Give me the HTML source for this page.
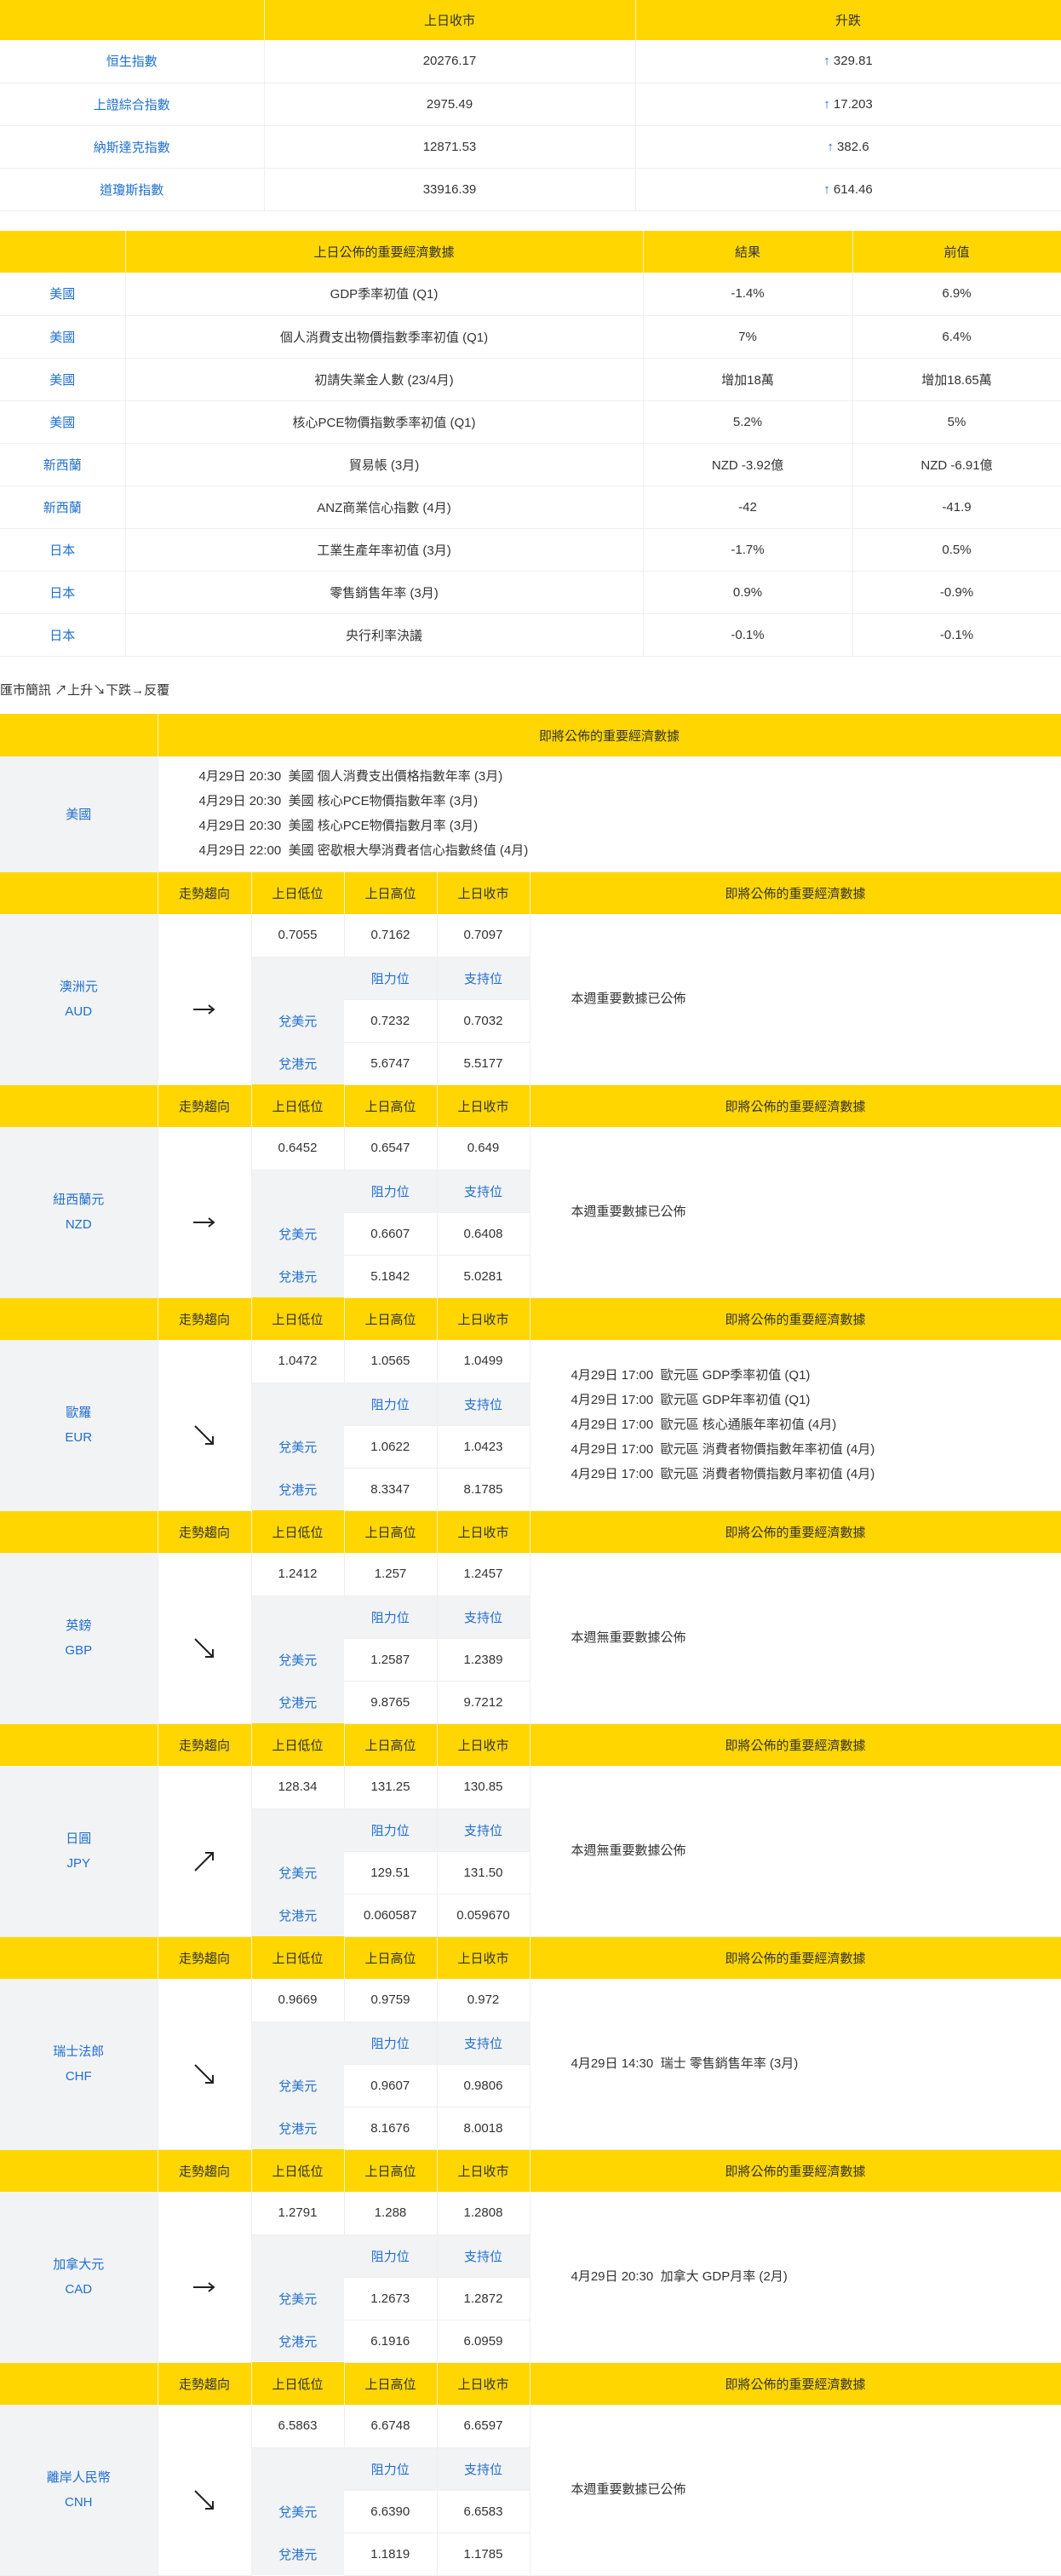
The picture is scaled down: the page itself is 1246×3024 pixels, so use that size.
<!DOCTYPE html>
<html><head><meta charset="utf-8">
<style>
*{margin:0;padding:0;box-sizing:border-box}
body{width:1246px;height:3003px;overflow:hidden;background:#fff;font-family:"Liberation Sans","Noto Sans CJK TC",sans-serif;font-size:15px;color:#333}
table{border-collapse:collapse;table-layout:fixed;width:1246px}
td,th{text-align:center;vertical-align:middle;font-weight:normal;padding:0;border-bottom:1px solid #efefef;border-right:1px solid #efefef}
th{background:#ffd600;color:#333;border-right:1px solid #fff4c0;border-bottom:none}
.b{color:#1f6fcc}
.g{background:#f2f3f5}
.l{text-align:left;padding-left:48px;line-height:29px}
#t1{position:absolute;top:0;left:0}
#t1 th{height:47px}#t1 td{height:50px}
#t2{position:absolute;top:271px;left:0}
#t2 th{height:49px}#t2 td{height:50px}
#note{position:absolute;top:799px;left:0;font-size:15px}
#t3{position:absolute;top:838px;left:0}
#t3 th{height:50px}
#t3 td{height:50px}
.up{color:#2b5fc0}
.cur{line-height:29px}
svg{display:block;margin:24px auto 0}
</style></head><body>
<table id="t1">
<colgroup><col style="width:310px"><col style="width:436px"><col style="width:500px"></colgroup>
<tr><th></th><th>上日收市</th><th>升跌</th></tr>
<tr><td class="b">恒生指數</td><td>20276.17</td><td><span class="up">↑</span> 329.81</td></tr>
<tr><td class="b">上證綜合指數</td><td>2975.49</td><td><span class="up">↑</span> 17.203</td></tr>
<tr><td class="b">納斯達克指數</td><td>12871.53</td><td><span class="up">↑</span> 382.6</td></tr>
<tr><td class="b">道瓊斯指數</td><td>33916.39</td><td><span class="up">↑</span> 614.46</td></tr>
</table>

<table id="t2">
<colgroup><col style="width:147px"><col style="width:608px"><col style="width:246px"><col style="width:245px"></colgroup>
<tr><th></th><th>上日公佈的重要經濟數據</th><th>結果</th><th>前值</th></tr>
<tr><td class="b">美國</td><td>GDP季率初值 (Q1)</td><td>-1.4%</td><td>6.9%</td></tr>
<tr><td class="b">美國</td><td>個人消費支出物價指數季率初值 (Q1)</td><td>7%</td><td>6.4%</td></tr>
<tr><td class="b">美國</td><td>初請失業金人數 (23/4月)</td><td>增加18萬</td><td>增加18.65萬</td></tr>
<tr><td class="b">美國</td><td>核心PCE物價指數季率初值 (Q1)</td><td>5.2%</td><td>5%</td></tr>
<tr><td class="b">新西蘭</td><td>貿易帳 (3月)</td><td>NZD -3.92億</td><td>NZD -6.91億</td></tr>
<tr><td class="b">新西蘭</td><td>ANZ商業信心指數 (4月)</td><td>-42</td><td>-41.9</td></tr>
<tr><td class="b">日本</td><td>工業生產年率初值 (3月)</td><td>-1.7%</td><td>0.5%</td></tr>
<tr><td class="b">日本</td><td>零售銷售年率 (3月)</td><td>0.9%</td><td>-0.9%</td></tr>
<tr><td class="b">日本</td><td>央行利率決議</td><td>-0.1%</td><td>-0.1%</td></tr>
</table>

<div id="note">匯市簡訊 ↗上升↘下跌→反覆</div>

<table id="t3">
<colgroup><col style="width:185px"><col style="width:110px"><col style="width:109px"><col style="width:109px"><col style="width:109px"><col style="width:624px"></colgroup>
<tr><th></th><th colspan="5">即將公佈的重要經濟數據</th></tr>
<tr><td class="g b" style="height:135px">美國</td><td colspan="5" style="text-align:left;padding-left:48px;line-height:29px;height:135px">4月29日 20:30&nbsp; 美國 個人消費支出價格指數年率 (3月)<br>4月29日 20:30&nbsp; 美國 核心PCE物價指數年率 (3月)<br>4月29日 20:30&nbsp; 美國 核心PCE物價指數月率 (3月)<br>4月29日 22:00&nbsp; 美國 密歇根大學消費者信心指數終值 (4月)</td></tr>

<tr><th></th><th>走勢趨向</th><th>上日低位</th><th>上日高位</th><th>上日收市</th><th>即將公佈的重要經濟數據</th></tr>
<tr><td rowspan="4" class="g b cur">澳洲元<br>AUD</td><td rowspan="4"><svg width="30" height="20" viewBox="0 0 30 20"><path d="M2 10H26M20 5L26 10L20 15" stroke="#222" stroke-width="2" fill="none"/></svg></td><td>0.7055</td><td>0.7162</td><td>0.7097</td><td rowspan="4" class="l">本週重要數據已公佈</td></tr>
<tr><td class="g" style="border:none"></td><td class="g b">阻力位</td><td class="g b">支持位</td></tr>
<tr><td class="g b" style="border:none">兌美元</td><td>0.7232</td><td>0.7032</td></tr>
<tr><td class="g b" style="border:none">兌港元</td><td>5.6747</td><td>5.5177</td></tr>

<tr><th></th><th>走勢趨向</th><th>上日低位</th><th>上日高位</th><th>上日收市</th><th>即將公佈的重要經濟數據</th></tr>
<tr><td rowspan="4" class="g b cur">紐西蘭元<br>NZD</td><td rowspan="4"><svg width="30" height="20" viewBox="0 0 30 20"><path d="M2 10H26M20 5L26 10L20 15" stroke="#222" stroke-width="2" fill="none"/></svg></td><td>0.6452</td><td>0.6547</td><td>0.649</td><td rowspan="4" class="l">本週重要數據已公佈</td></tr>
<tr><td class="g" style="border:none"></td><td class="g b">阻力位</td><td class="g b">支持位</td></tr>
<tr><td class="g b" style="border:none">兌美元</td><td>0.6607</td><td>0.6408</td></tr>
<tr><td class="g b" style="border:none">兌港元</td><td>5.1842</td><td>5.0281</td></tr>

<tr><th></th><th>走勢趨向</th><th>上日低位</th><th>上日高位</th><th>上日收市</th><th>即將公佈的重要經濟數據</th></tr>
<tr><td rowspan="4" class="g b cur">歐羅<br>EUR</td><td rowspan="4"><svg width="26" height="26" viewBox="0 0 26 26"><path d="M2 2L23 23M23 14V23H14" stroke="#222" stroke-width="2" fill="none"/></svg></td><td>1.0472</td><td>1.0565</td><td>1.0499</td><td rowspan="4" class="l">4月29日 17:00&nbsp; 歐元區 GDP季率初值 (Q1)<br>4月29日 17:00&nbsp; 歐元區 GDP年率初值 (Q1)<br>4月29日 17:00&nbsp; 歐元區 核心通脹年率初值 (4月)<br>4月29日 17:00&nbsp; 歐元區 消費者物價指數年率初值 (4月)<br>4月29日 17:00&nbsp; 歐元區 消費者物價指數月率初值 (4月)</td></tr>
<tr><td class="g" style="border:none"></td><td class="g b">阻力位</td><td class="g b">支持位</td></tr>
<tr><td class="g b" style="border:none">兌美元</td><td>1.0622</td><td>1.0423</td></tr>
<tr><td class="g b" style="border:none">兌港元</td><td>8.3347</td><td>8.1785</td></tr>

<tr><th></th><th>走勢趨向</th><th>上日低位</th><th>上日高位</th><th>上日收市</th><th>即將公佈的重要經濟數據</th></tr>
<tr><td rowspan="4" class="g b cur">英鎊<br>GBP</td><td rowspan="4"><svg width="26" height="26" viewBox="0 0 26 26"><path d="M2 2L23 23M23 14V23H14" stroke="#222" stroke-width="2" fill="none"/></svg></td><td>1.2412</td><td>1.257</td><td>1.2457</td><td rowspan="4" class="l">本週無重要數據公佈</td></tr>
<tr><td class="g" style="border:none"></td><td class="g b">阻力位</td><td class="g b">支持位</td></tr>
<tr><td class="g b" style="border:none">兌美元</td><td>1.2587</td><td>1.2389</td></tr>
<tr><td class="g b" style="border:none">兌港元</td><td>9.8765</td><td>9.7212</td></tr>

<tr><th></th><th>走勢趨向</th><th>上日低位</th><th>上日高位</th><th>上日收市</th><th>即將公佈的重要經濟數據</th></tr>
<tr><td rowspan="4" class="g b cur">日圓<br>JPY</td><td rowspan="4"><svg width="26" height="26" viewBox="0 0 26 26"><path d="M2 24L23 3M14 3H23V12" stroke="#222" stroke-width="2" fill="none"/></svg></td><td>128.34</td><td>131.25</td><td>130.85</td><td rowspan="4" class="l">本週無重要數據公佈</td></tr>
<tr><td class="g" style="border:none"></td><td class="g b">阻力位</td><td class="g b">支持位</td></tr>
<tr><td class="g b" style="border:none">兌美元</td><td>129.51</td><td>131.50</td></tr>
<tr><td class="g b" style="border:none">兌港元</td><td>0.060587</td><td>0.059670</td></tr>

<tr><th></th><th>走勢趨向</th><th>上日低位</th><th>上日高位</th><th>上日收市</th><th>即將公佈的重要經濟數據</th></tr>
<tr><td rowspan="4" class="g b cur">瑞士法郎<br>CHF</td><td rowspan="4"><svg width="26" height="26" viewBox="0 0 26 26"><path d="M2 2L23 23M23 14V23H14" stroke="#222" stroke-width="2" fill="none"/></svg></td><td>0.9669</td><td>0.9759</td><td>0.972</td><td rowspan="4" class="l">4月29日 14:30&nbsp; 瑞士 零售銷售年率 (3月)</td></tr>
<tr><td class="g" style="border:none"></td><td class="g b">阻力位</td><td class="g b">支持位</td></tr>
<tr><td class="g b" style="border:none">兌美元</td><td>0.9607</td><td>0.9806</td></tr>
<tr><td class="g b" style="border:none">兌港元</td><td>8.1676</td><td>8.0018</td></tr>

<tr><th></th><th>走勢趨向</th><th>上日低位</th><th>上日高位</th><th>上日收市</th><th>即將公佈的重要經濟數據</th></tr>
<tr><td rowspan="4" class="g b cur">加拿大元<br>CAD</td><td rowspan="4"><svg width="30" height="20" viewBox="0 0 30 20"><path d="M2 10H26M20 5L26 10L20 15" stroke="#222" stroke-width="2" fill="none"/></svg></td><td>1.2791</td><td>1.288</td><td>1.2808</td><td rowspan="4" class="l">4月29日 20:30&nbsp; 加拿大 GDP月率 (2月)</td></tr>
<tr><td class="g" style="border:none"></td><td class="g b">阻力位</td><td class="g b">支持位</td></tr>
<tr><td class="g b" style="border:none">兌美元</td><td>1.2673</td><td>1.2872</td></tr>
<tr><td class="g b" style="border:none">兌港元</td><td>6.1916</td><td>6.0959</td></tr>

<tr><th></th><th>走勢趨向</th><th>上日低位</th><th>上日高位</th><th>上日收市</th><th>即將公佈的重要經濟數據</th></tr>
<tr><td rowspan="4" class="g b cur">離岸人民幣<br>CNH</td><td rowspan="4"><svg width="26" height="26" viewBox="0 0 26 26"><path d="M2 2L23 23M23 14V23H14" stroke="#222" stroke-width="2" fill="none"/></svg></td><td>6.5863</td><td>6.6748</td><td>6.6597</td><td rowspan="4" class="l">本週重要數據已公佈</td></tr>
<tr><td class="g" style="border:none"></td><td class="g b">阻力位</td><td class="g b">支持位</td></tr>
<tr><td class="g b" style="border:none">兌美元</td><td>6.6390</td><td>6.6583</td></tr>
<tr><td class="g b" style="border:none">兌港元</td><td>1.1819</td><td>1.1785</td></tr>
</table>
</body></html>
